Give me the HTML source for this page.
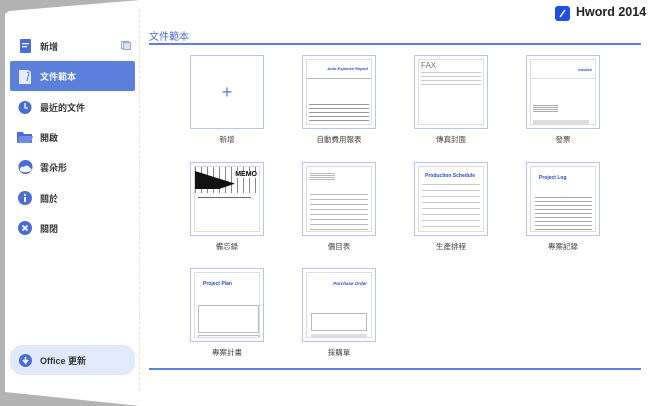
<!DOCTYPE html>
<html><head><meta charset="utf-8"><style>
*{margin:0;padding:0;box-sizing:border-box}
body{width:650px;height:406px;background:#fff;position:relative;overflow:hidden;font-family:"Liberation Sans","Noto Sans CJK TC",sans-serif}
.abs{position:absolute}
.side{left:0;top:0;width:140px;height:406px;background:#b3b3b3}
.panel{left:5px;top:0;width:135px;height:406px;background:#fff;clip-path:polygon(0 14px,4px 11px,135px 0,135px 406px,0 392px)}
.dash{left:139px;top:10px;width:0;height:380px;border-left:1px dashed #e2e2e2}
.item{left:10px;width:125px;height:30px;display:flex;align-items:center;font-size:9px;color:#333;font-weight:bold}
.item .ic{width:30px;display:flex;justify-content:center}
.item span{margin-left:0}
.active{background:#5b7fdb;color:#fff;border-radius:2px}
.thumb{width:74px;height:74px;border:1.5px solid #b6c4f0;background:#fff;padding:3px}
.thumb .in{width:100%;height:100%;border:1px solid #ddd;position:relative;overflow:hidden;font-size:4px}
.lbl{width:74px;text-align:center;font-size:7.5px;color:#444}
.ln{position:absolute;height:1px;background:#bbb}
</style></head><body>
<div class="abs side"></div>
<div class="abs panel"></div>
<div class="abs dash"></div>

<div class="abs item" style="top:31px"><div class="ic"><svg width="11" height="14"><rect width="11" height="14" rx="1" fill="#4a6cd4"/><rect x="2" y="4" width="7" height="1.3" fill="#fff"/><rect x="2" y="7" width="5" height="1.3" fill="#fff"/></svg></div><span>新增</span>
<svg style="position:absolute;right:4px;top:10px" width="10" height="9"><rect x="0.5" y="0.5" width="7" height="7" fill="none" stroke="#9aa8cc"/><rect x="2.5" y="1.5" width="7" height="7" fill="#dde3f3" stroke="#9aa8cc"/></svg></div>
<div class="abs item active" style="top:61px"><div class="ic"><svg width="12" height="15"><path d="M0 1h9l3 2v12H0z" fill="#e7ecfa"/><path d="M8 3l2 1-2 8" stroke="#5b7fdb" fill="none"/></svg></div><span>文件範本</span></div>
<div class="abs item" style="top:92px"><div class="ic"><svg width="14" height="14"><circle cx="7" cy="7.5" r="6.5" fill="#4a6cd4"/><path d="M7 3v5h3" stroke="#fff" stroke-width="1.3" fill="none"/></svg></div><span>最近的文件</span></div>
<div class="abs item" style="top:122px"><div class="ic"><svg width="16" height="11"><path d="M0 0h6l1 2h8v9H0z" fill="#4a6cd4"/><path d="M2 4h14l-2 7H0z" fill="#6e8ce0"/></svg></div><span>開啟</span></div>
<div class="abs item" style="top:152px"><div class="ic"><svg width="15" height="14"><circle cx="7.5" cy="7" r="7" fill="#4a6cd4"/><path d="M2 10c0-3 2-4 4-3 1-2 5-2 6 1 1 0 1.5 1 1.5 2 -1 3-11 3-11.5 0z" fill="#fff"/></svg></div><span>雲朵形</span></div>
<div class="abs item" style="top:183px"><div class="ic"><svg width="14" height="14"><circle cx="7" cy="7" r="7" fill="#4a6cd4"/><rect x="6" y="6" width="2" height="5" fill="#fff"/><circle cx="7" cy="3.8" r="1.1" fill="#fff"/></svg></div><span>關於</span></div>
<div class="abs item" style="top:213px"><div class="ic"><svg width="14" height="14"><circle cx="7" cy="7" r="7" fill="#4a6cd4"/><path d="M4.5 4.5l5 5M9.5 4.5l-5 5" stroke="#fff" stroke-width="1.6"/></svg></div><span>關閉</span></div>
<div class="abs item" style="top:345px;background:#e1e9fc;border-radius:12px;color:#333"><div class="ic"><svg width="13" height="13"><circle cx="6.5" cy="6.5" r="6.5" fill="#4a6cd4"/><path d="M6.5 3v5M4 6l2.5 3 2.5-3" stroke="#fff" stroke-width="1.6" fill="none"/></svg></div><span>Office 更新</span></div>

<div class="abs" style="left:555px;top:6px;width:15px;height:15px;border-radius:3px;background:#1f4fe6"></div>
<svg class="abs" style="left:555px;top:6px" width="15" height="15"><path d="M5 11l5-7" stroke="#fff" stroke-width="1.5"/></svg>
<div class="abs" style="left:576px;top:5px;font-size:12.5px;font-weight:bold;color:#222">Hword 2014</div>
<div class="abs" style="left:149px;top:28px;font-size:10px;color:#4a6cd4">文件範本</div>
<div class="abs" style="left:149px;top:43px;width:492px;height:2px;background:#5b7fdb"></div>
<div class="abs" style="left:149px;top:368px;width:492px;height:2px;background:#5b7fdb"></div>

<!-- row 1 -->
<div class="abs thumb" style="left:190px;top:55px;padding:0"><div style="text-align:center;color:#5b7fdb;font-size:18px;line-height:72px">+</div></div>
<div class="abs thumb" style="left:302px;top:55px"><div class="in"><div style="position:absolute;right:3px;top:6px;color:#2b4cc0;font-weight:bold;font-style:italic;font-size:4px">Auto Expense Report</div><div class="ln" style="left:0;right:0;top:18px"></div><div class="ln" style="left:2px;right:2px;top:44px;height:22px;background:repeating-linear-gradient(#999 0 1px,#fff 1px 4px)"></div></div></div>
<div class="abs thumb" style="left:414px;top:55px"><div class="in"><div style="position:absolute;left:2px;top:1px;color:#777;font-size:8px">FAX</div><div class="ln" style="left:2px;right:2px;top:12px;height:14px;background:repeating-linear-gradient(#ccc 0 1px,#fff 1px 4px)"></div></div></div>
<div class="abs thumb" style="left:526px;top:55px"><div class="in"><div style="position:absolute;right:3px;top:7px;color:#2b4cc0;font-weight:bold;font-style:italic;font-size:4px">Invoice</div><div class="ln" style="left:0;right:0;top:18px;background:#ddd"></div><div class="ln" style="left:2px;width:25px;top:45px;height:8px;background:repeating-linear-gradient(#aaa 0 1px,#fff 1px 2px)"></div><div class="ln" style="left:2px;right:6px;top:60px;height:6px;background:#ddd"></div></div></div>
<div class="abs lbl" style="left:190px;top:134px">新增</div>
<div class="abs lbl" style="left:302px;top:134px">自動費用報表</div>
<div class="abs lbl" style="left:414px;top:134px">傳真封面</div>
<div class="abs lbl" style="left:526px;top:134px">發票</div>

<!-- row 2 -->
<div class="abs thumb" style="left:190px;top:162px"><div class="in"><div style="position:absolute;left:0;right:0;top:0;height:26px;background:repeating-linear-gradient(90deg,#888 0 1px,#fff 1px 6px),#fff"></div><div style="position:absolute;left:0;top:4px;width:40px;height:18px;background:#111;clip-path:polygon(0 0,100% 70%,60% 100%,0 100%)"></div><div style="position:absolute;right:2px;top:4px;font-weight:bold;font-size:7px;background:#fff">MEMO</div><div class="ln" style="left:3px;right:8px;top:30px;background:#666"></div></div></div>
<div class="abs thumb" style="left:302px;top:162px"><div class="in"><div class="ln" style="left:3px;right:3px;top:27px;height:40px;background:repeating-linear-gradient(#bbb 0 1px,#fff 1px 5px)"></div><div class="ln" style="left:3px;width:25px;top:6px;height:8px;background:repeating-linear-gradient(#bbb 0 1px,#fff 1px 2px)"></div></div></div>
<div class="abs thumb" style="left:414px;top:162px"><div class="in"><div style="position:absolute;left:6px;top:6px;color:#2b4cc0;font-weight:bold;font-size:5px">Production Schedule</div><div class="ln" style="left:3px;right:3px;top:17px;height:50px;background:repeating-linear-gradient(#ccc 0 1px,#fff 1px 6px)"></div></div></div>
<div class="abs thumb" style="left:526px;top:162px"><div class="in"><div style="position:absolute;left:8px;top:8px;color:#2b4cc0;font-weight:bold;font-size:5px">Project Log</div><div class="ln" style="left:4px;right:3px;top:30px;height:36px;background:repeating-linear-gradient(#aaa 0 1px,#fff 1px 4px)"></div></div></div>
<div class="abs lbl" style="left:190px;top:241px">備忘錄</div>
<div class="abs lbl" style="left:302px;top:241px">價目表</div>
<div class="abs lbl" style="left:414px;top:241px">生產排程</div>
<div class="abs lbl" style="left:526px;top:241px">專案記錄</div>

<!-- row 3 -->
<div class="abs thumb" style="left:190px;top:268px"><div class="in"><div style="position:absolute;left:8px;top:8px;color:#2b4cc0;font-weight:bold;font-size:5px">Project Plan</div><div class="ln" style="left:3px;right:0;top:32px;height:28px;background:#fff;border:1px solid #bbb"></div><div class="ln" style="left:3px;right:0;top:62px;height:6px;background:#fff;border:1px solid #bbb"></div></div></div>
<div class="abs thumb" style="left:302px;top:268px"><div class="in"><div style="position:absolute;right:4px;top:8px;color:#2b4cc0;font-weight:bold;font-style:italic;font-size:4.5px">Purchase Order</div><div class="ln" style="left:4px;right:4px;top:40px;height:18px;background:#fff;border:1px solid #bbb"></div><div class="ln" style="left:4px;right:4px;top:61px;height:5px;background:#ddd"></div></div></div>
<div class="abs lbl" style="left:190px;top:347px">專案計畫</div>
<div class="abs lbl" style="left:302px;top:347px">採購單</div>
</body></html>
